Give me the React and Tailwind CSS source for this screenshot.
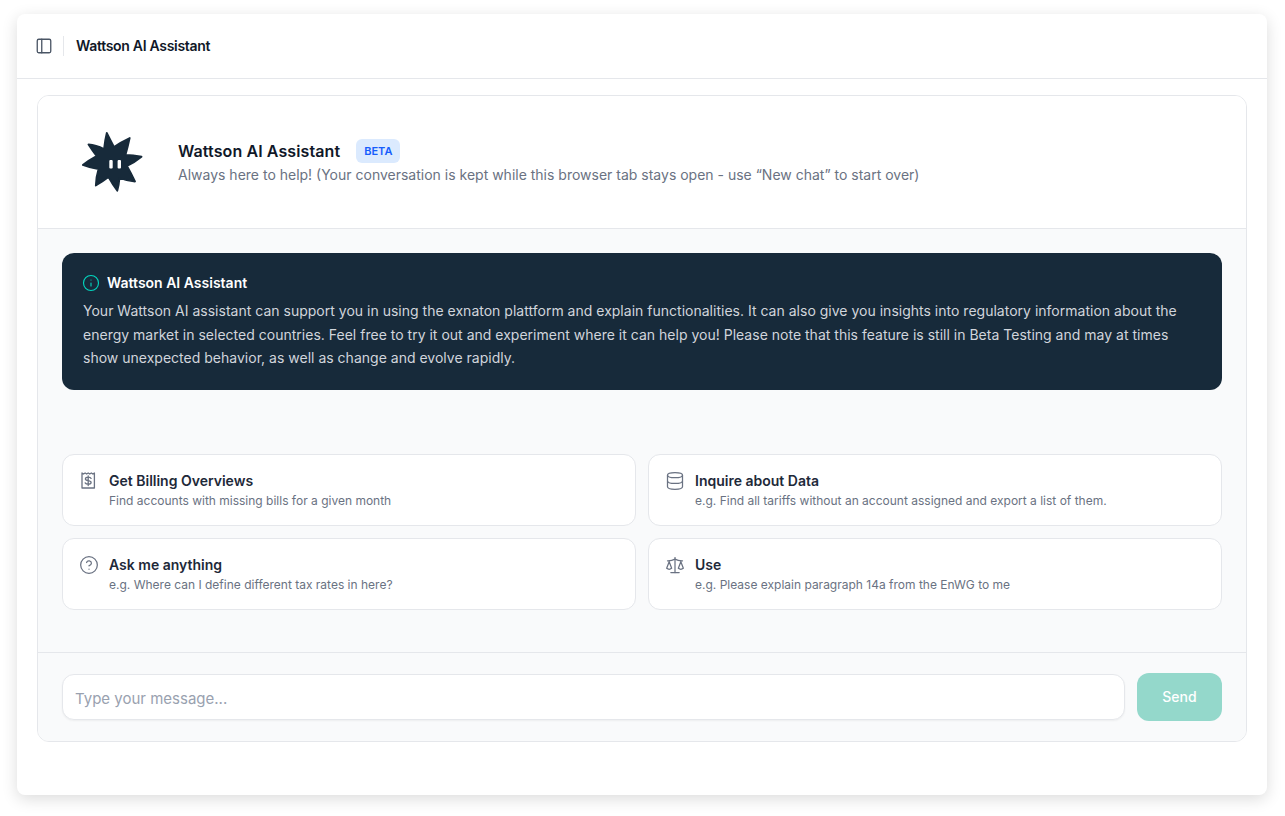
import React from 'react'
import { Info, CircleHelp, Database, Scale, PanelLeft } from 'lucide-react'

const font = { fontFamily: 'Inter, sans-serif' }

const suggestions = [
  { title: 'Get Billing Overviews', text: 'Find accounts with missing bills for a given month', icon: 'bill' },
  { title: 'Inquire about Data', text: 'e.g. Find all tariffs without an account assigned and export a list of them.', icon: 'data' },
  { title: 'Ask me anything', text: 'e.g. Where can I define different tax rates in here?', icon: 'help' },
  { title: 'Use', text: 'e.g. Please explain paragraph 14a from the EnWG to me', icon: 'scale' },
]

const BillIcon = () => (
  <svg width="20" height="20" viewBox="0 0 20 20" fill="none" stroke="currentColor" strokeWidth="1.3" strokeLinejoin="round" strokeLinecap="round">
    <path d="M3 2 L4.550 3 L6.100 2 L7.650 3 L9.200 2 L10.750 3 L12.300 2 L13.850 3 L15.400 2 V17 H3 Z" />
    <path d="M12.100 7.400 C11.700 6.500 10.600 6.200 9.200 6.200 C7.600 6.200 6.400 6.800 6.400 8 C6.400 10.400 12.100 9 12.100 11.500 C12.100 12.700 10.800 13.200 9.200 13.200 C7.800 13.200 6.700 12.800 6.200 11.900 M9.200 4.800 V14.600" />
  </svg>
)

const icons = {
  bill: <BillIcon />,
  data: <Database size={20} strokeWidth={1.5} />,
  help: <CircleHelp size={20} strokeWidth={1.5} />,
  scale: <Scale size={20} strokeWidth={1.5} />,
}

const Logo = () => (
  <svg width="62" height="62" viewBox="0 0 62 62" className="text-[#172a3a]">
    <path
      fill="currentColor"
      stroke="currentColor"
      strokeWidth="1.800"
      strokeLinejoin="round"
      d="M24.800 1.800 Q29 10 32 16 Q39 11 47.700 7 Q46 15 43.500 24 Q51 24 59.500 25.700 Q53 31 45 35 Q49 42 53 50.500 Q45 50 37.500 47 Q37 54 35.300 59.800 Q31 54 26.500 46 Q20 51 13.800 54.500 Q14 46 16.500 38 Q8 37 .800 34 Q7 29 14.500 25 Q10 19 6.500 13.500 Q14 14 22 18 Q23 9 24.800 1.800 Z"
    />
    <rect x="27.300" y="29" width="3.400" height="8.500" rx="1" fill="#fff" />
    <rect x="35.600" y="29" width="3.400" height="8.500" rx="1" fill="#fff" />
  </svg>
)

const SuggestionCard = ({ item }) => (
  <div className="flex h-[72px] gap-[10px] rounded-xl border border-gray-200 bg-white px-4 pt-[15px]">
    <div className="mt-px text-gray-500">{icons[item.icon]}</div>
    <div>
      <div className="text-sm leading-[22px] font-semibold text-gray-800">{item.title}</div>
      <div className="text-xs leading-[18px] text-gray-500">{item.text}</div>
    </div>
  </div>
)

export default function App() {
  return (
    <div className="h-[816px] bg-white pt-[14px] pr-[18px] pl-[17px] antialiased" style={font}>
      <div className="h-[781px] rounded-lg bg-white shadow-[0_4px_16px_rgba(0,0,0,0.14)]">
        {/* Top bar */}
        <div className="flex h-[65px] items-center border-b border-gray-200 pl-[18px]">
          <PanelLeft size={18} strokeWidth={1.75} className="text-gray-600" />
          <div className="mr-3 ml-[10px] h-5 w-px bg-gray-200" />
          <span className="text-sm font-semibold tracking-[-0.3px] text-gray-900">Wattson AI Assistant</span>
        </div>

        <div className="px-5 pt-4">
          <div className="overflow-hidden rounded-xl border border-gray-200">
            {/* Header */}
            <div className="flex h-[133px] items-center border-b border-gray-200 bg-white pl-[44px]">
              <Logo />
              <div className="ml-[34px]">
                <div className="flex items-center">
                  <span className="text-base font-semibold tracking-[0.1px] text-gray-900">Wattson AI Assistant</span>
                  <span className="ml-[16px] rounded-md bg-blue-100 px-2 py-1 text-[11px] leading-4 font-semibold text-blue-600">BETA</span>
                </div>
                <p className="mt-[2px] text-sm leading-5 text-gray-500">Always here to help! (Your conversation is kept while this browser tab stays open - use “New chat” to start over)</p>
              </div>
            </div>

            {/* Chat body */}
            <div className="h-[424px] border-b border-gray-200 bg-gray-50 px-6 pt-6">
              <div className="h-[137px] rounded-xl bg-[#172a3a] px-[21px] pt-[20px]">
                <div className="flex items-center gap-[7px]">
                  <Info size={18} strokeWidth={1.5} className="-ml-px text-teal-400" />
                  <span className="text-sm font-semibold text-white">Wattson AI Assistant</span>
                </div>
                <p className="mt-[6px] text-sm leading-[23.6px] tracking-[0.01px] text-gray-300">
                  Your Wattson AI assistant can support you in using the exnaton plattform and explain functionalities. It can also give you insights into regulatory information about the energy market in selected countries. Feel free to try it out and experiment where it can help you! Please note that this feature is still in Beta Testing and may at times show unexpected behavior, as well as change and evolve rapidly.
                </p>
              </div>
              <div className="mt-16 grid grid-cols-2 gap-3">
                {suggestions.map((item) => (
                  <SuggestionCard key={item.title} item={item} />
                ))}
              </div>
            </div>

            {/* Input */}
            <div className="flex h-[88px] items-center gap-3 bg-gray-50 px-6">
              <input
                placeholder="Type your message..."
                className="h-[46px] flex-1 rounded-xl border border-gray-200 bg-white px-3 pt-[2px] text-[15px] shadow-xs placeholder:text-gray-400"
              />
              <button className="h-12 w-[85px] rounded-xl bg-[#94d8cb] text-sm font-medium text-white">Send</button>
            </div>
          </div>
        </div>
      </div>
    </div>
  )
}
